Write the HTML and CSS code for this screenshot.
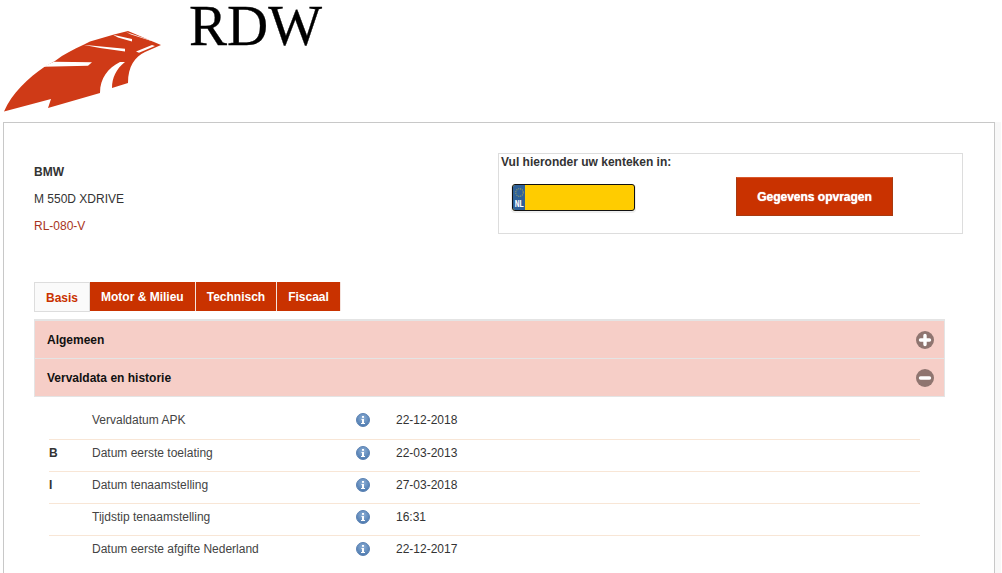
FILE: index.html
```html
<!DOCTYPE html>
<html lang="nl">
<head>
<meta charset="utf-8">
<title>RDW</title>
<link rel="stylesheet" href="styles.css">
</head>
<body>
<header class="head">
  <svg class="logo" width="165" height="90" viewBox="0 25 165 90">
    <path fill="#cf3a17" d="M4 111.500C12 93 28 78 45 66.500L55 61C64 54 74 49 83 45L90 41.500L114 34.500L128 31L161 45L145 52C135 57 128 66 128 83L112 88C112 78 116 69 125 62L120 62C108 68 100 78 100 93L48 108L51 99Z"/>
    <path fill="#fff" d="M43 66.700L54 61.700L92 62.300L88 65.700ZM83 44.700L125 48.700L125 51.500L100 48ZM113 34.800L132 39L132 41.500L118 37.500ZM126 32L150 40L153 41.500L131 34.500ZM136 51.500L152 45L155 46L139 52.800Z"/>
  </svg>
  <h1 class="brand">RDW</h1>
</header>
<main class="card">
  <section class="top">
    <div class="car">
      <p class="make">BMW</p>
      <p>M 550D XDRIVE</p>
      <p class="plate-text">RL-080-V</p>
    </div>
    <form class="search">
      <label class="search-label">Vul hieronder uw kenteken in:</label>
      <div class="search-row">
        <div class="plate">
          <div class="eu">
            <svg width="11" height="11" viewBox="0 0 11 11"><circle cx="5.500" cy="5.500" r="3.800" fill="none" stroke="#7f8f6c" stroke-width="1.300" stroke-dasharray="1.200 0.800"/></svg>
            <span class="nl">NL</span>
          </div>
        </div>
        <button type="button" class="go">Gegevens opvragen</button>
      </div>
    </form>
  </section>
  <nav class="tabs">
    <a class="tab active">Basis</a>
    <a class="tab">Motor &amp; Milieu</a>
    <a class="tab">Technisch</a>
    <a class="tab">Fiscaal</a>
  </nav>
  <section class="acc">
    <div class="acc-head"><span>Algemeen</span>
      <svg class="toggle" width="18" height="18" viewBox="0 0 18 18"><circle cx="9" cy="9" r="9" fill="#8f7570"/><path d="M9 4.500v9M4.500 9h9" stroke="#fff" stroke-width="3.400" stroke-linecap="round"/></svg>
    </div>
    <div class="acc-head second"><span>Vervaldata en historie</span>
      <svg class="toggle" width="18" height="18" viewBox="0 0 18 18"><circle cx="9" cy="9" r="9" fill="#8f7570"/><path d="M4.500 9h9" stroke="#fff" stroke-width="3.400" stroke-linecap="round"/></svg>
    </div>
  </section>
  <div class="rows">
    <div class="row first"><b class="code"></b><span class="name">Vervaldatum APK</span><svg class="info" width="14" height="14" viewBox="0 0 14 14"><use href="#i"/></svg><span>22-12-2018</span></div>
    <div class="row"><b class="code">B</b><span class="name">Datum eerste toelating</span><svg class="info" width="14" height="14" viewBox="0 0 14 14"><use href="#i"/></svg><span>22-03-2013</span></div>
    <div class="row"><b class="code">I</b><span class="name">Datum tenaamstelling</span><svg class="info" width="14" height="14" viewBox="0 0 14 14"><use href="#i"/></svg><span>27-03-2018</span></div>
    <div class="row"><b class="code"></b><span class="name">Tijdstip tenaamstelling</span><svg class="info" width="14" height="14" viewBox="0 0 14 14"><use href="#i"/></svg><span>16:31</span></div>
    <div class="row"><b class="code"></b><span class="name">Datum eerste afgifte Nederland</span><svg class="info" width="14" height="14" viewBox="0 0 14 14"><use href="#i"/></svg><span>22-12-2017</span></div>
  </div>
</main>
<svg width="0" height="0" class="defs"><defs>
  <radialGradient id="g" cx="50%" cy="35%" r="65%"><stop offset="0" stop-color="#8fb0d6"/><stop offset="1" stop-color="#4a78ae"/></radialGradient>
  <g id="i"><circle cx="7" cy="7" r="6.500" fill="url(#g)" stroke="#5d83b3" stroke-width="1"/><rect x="6" y="3" width="2" height="1.800" fill="#fff"/><path d="M5.500 6h2.500v4h1v1h-4v-1h1v-3h-.5z" fill="#fff"/></g>
</defs></svg>
</body>
</html>
```
FILE: styles.css
```css
* { box-sizing: border-box; }
html, body { margin: 0; padding: 0; }
body { background: #fff; color: #333; font: 12px/16px "Liberation Sans", Arial, sans-serif; overflow: hidden; height: 573px; }
p { margin: 0; }
.head { display: flex; height: 122px; align-items: flex-start; }
.logo { display: block; margin-top: 25px; flex: none; }
.brand { margin: 0 0 0 24px; font: 400 57px/51px "Liberation Serif", "Times New Roman", serif; color: #000; -webkit-text-stroke: .3px #000; }
.card { margin: 0 7px 0 3px; border: 1px solid #c8c8c8; border-bottom: 0; padding: 30px 30px 0; height: 451px; box-shadow: 6px 0 0 #f8f8f8; }
.top { display: flex; justify-content: space-between; height: 129px; }
.car { padding-top: 11px; display: flex; flex-direction: column; gap: 11px; }
.make { font-weight: 700; }
.plate-text { color: #a8341c; }
.search { width: 465px; height: 81px; margin-right: 1px; border: 1px solid #ddd; padding-left: 2px; }
.search-label { display: block; font-weight: 700; line-height: 16px; }
.search-row { display: flex; align-items: flex-start; margin-top: 7px; }
.plate { width: 123px; height: 27px; margin: 7px 0 0 11px; background: #fc0; border: 1px solid #111; border-radius: 3px; box-shadow: 0 1px 0 1px #eee; display: flex; overflow: hidden; }
.eu { width: 12px; background: #2f6199; display: flex; flex-direction: column; align-items: center; justify-content: space-between; }
.eu svg { display: block; margin-top: 2px; }
.nl { color: #fff; font: 700 8px/10px "DejaVu Sans Mono", monospace; letter-spacing: -.5px; }
.go { margin-left: 101px; width: 157px; height: 39px; background: #c93200; border: 1px solid #a83a10; border-top-color: #d9582c; color: #fff; font: 700 12px/16px "Liberation Sans", Arial, sans-serif; padding: 0; text-shadow: 0 0 1px #fff; }
.tabs { display: flex; height: 30px; align-items: flex-start; }
.tab { display: block; height: 29px; padding: 0 11px; line-height: 30px; background: #c93200; color: #fff; font-weight: 700; border-right: 1px solid #f4e3de; white-space: nowrap; }
.tab.active { height: 30px; background: #fafafa; color: #c93200; border: 1px solid #ddd; line-height: 30px; }
.acc { margin-top: 7px; width: 911px; border: solid #e4e4e4; border-width: 0 1px 1px; }
.acc-head { height: 39px; background: #f6cec7; border-top: 2px solid #e4e4e4; padding: 0 10px 0 12px; display: flex; align-items: center; justify-content: space-between; font-weight: 700; color: #111; }
.acc-head.second { height: 38px; border-top-width: 1px; }
.toggle { display: block; }
.rows { width: 871px; margin-left: 15px; }
.row { display: flex; align-items: flex-start; height: 32px; padding-top: 5px; border-bottom: 1px solid #f8e6d6; }
.row.first { height: 43px; padding-top: 15px; }
.row:last-child { border-bottom: 0; }
.code { width: 15px; color: #333; }
.name { width: 264px; margin-left: 28px; color: #444; }
.info { margin: 1px 26px 0 0; flex: none; }
.defs { position: absolute; }
```
